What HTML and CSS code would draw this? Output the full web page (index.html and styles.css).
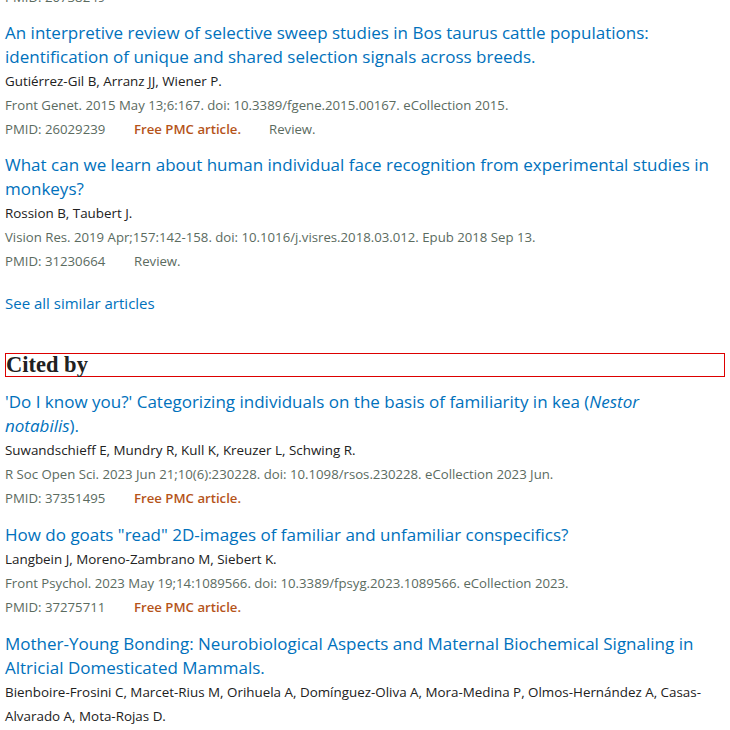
FILE: index.html
```html
<!DOCTYPE html>
<html>
<head>
<meta charset="utf-8">
<link rel="stylesheet" href="styles.css">
</head>
<body>
<div class="page">
  <div class="docsum partial">
    <div class="line pmid-line"><span class="pmid">PMID: 20738249</span></div>
  </div>

  <div class="docsum">
    <a class="title" href="#">An interpretive review of selective sweep studies in Bos taurus cattle populations: identification of unique and shared selection signals across breeds.</a>
    <div class="line authors">Gutiérrez-Gil B, Arranz JJ, Wiener P.</div>
    <div class="line citation">Front Genet. 2015 May 13;6:167. doi: 10.3389/fgene.2015.00167. eCollection 2015.</div>
    <div class="line pmid-line"><span class="pmid">PMID: 26029239</span><span class="free">Free PMC article.</span><span class="type">Review.</span></div>
  </div>

  <div class="docsum">
    <a class="title" href="#">What can we learn about human individual face recognition from experimental studies in monkeys?</a>
    <div class="line authors">Rossion B, Taubert J.</div>
    <div class="line citation">Vision Res. 2019 Apr;157:142-158. doi: 10.1016/j.visres.2018.03.012. Epub 2018 Sep 13.</div>
    <div class="line pmid-line"><span class="pmid">PMID: 31230664</span><span class="type">Review.</span></div>
  </div>

  <a class="see-all" href="#">See all similar articles</a>

  <h2 class="section-title">Cited by</h2>

  <div class="docsum cited">
    <a class="title" href="#">'Do I know you?' Categorizing individuals on the basis of familiarity in kea (<em>Nestor</em> <em>notabilis</em>).</a>
    <div class="line authors">Suwandschieff E, Mundry R, Kull K, Kreuzer L, Schwing R.</div>
    <div class="line citation">R Soc Open Sci. 2023 Jun 21;10(6):230228. doi: 10.1098/rsos.230228. eCollection 2023 Jun.</div>
    <div class="line pmid-line"><span class="pmid">PMID: 37351495</span><span class="free">Free PMC article.</span></div>
  </div>

  <div class="docsum cited">
    <a class="title" href="#">How do goats "read" 2D-images of familiar and unfamiliar conspecifics?</a>
    <div class="line authors">Langbein J, Moreno-Zambrano M, Siebert K.</div>
    <div class="line citation">Front Psychol. 2023 May 19;14:1089566. doi: 10.3389/fpsyg.2023.1089566. eCollection 2023.</div>
    <div class="line pmid-line"><span class="pmid">PMID: 37275711</span><span class="free">Free PMC article.</span></div>
  </div>

  <div class="docsum cited">
    <a class="title" href="#">Mother-Young Bonding: Neurobiological Aspects and Maternal Biochemical Signaling in Altricial Domesticated Mammals.</a>
    <div class="line authors">Bienboire-Frosini C, Marcet-Rius M, Orihuela A, Domínguez-Oliva A, Mora-Medina P, Olmos-Hernández A, Casas-Alvarado A, Mota-Rojas D.</div>
  </div>
</div>
</body>
</html>
```

FILE: styles.css
```css
html, body {
  margin: 0;
  padding: 0;
  background: #ffffff;
}

body {
  font-family: "Open Sans", "Noto Sans", sans-serif;
  color: #212121;
  overflow: hidden;
}

.page {
  width: 720px;
  padding: 0 5px;
  margin-top: -15px;
  display: flex;
  flex-direction: column;
}

.docsum {
  display: flex;
  flex-direction: column;
  margin-bottom: 12px;
}

.docsum.cited {
  margin-bottom: 13px;
}

.title {
  font-size: 17px;
  line-height: 24px;
  color: #0071bc;
  text-decoration: none;
  max-width: 710px;
}

.title em {
  font-style: italic;
}

.line {
  font-size: 13.2px;
  line-height: 24px;
}

.authors {
  color: #212121;
  font-size: 13.4px;
}

.citation {
  color: #5b6b5f;
}

.pmid-line {
  display: flex;
  color: #5b6b5f;
}

.pmid {
  width: 129px;
}

.free {
  color: #b5541a;
  font-weight: 600;
  width: 135px;
}

.type {
  color: #5b6b5f;
}

.see-all {
  margin-top: 6px;
  font-size: 15px;
  line-height: 24px;
  color: #0071bc;
  text-decoration: none;
  align-self: flex-start;
}

.section-title {
  margin: 38px 0 13px 0;
  font-family: "Liberation Serif", "DejaVu Serif", serif;
  font-weight: bold;
  font-size: 22.5px;
  line-height: 22px;
  color: #212121;
  border: 1px solid #dd0000;
  padding: 0;
}
```
